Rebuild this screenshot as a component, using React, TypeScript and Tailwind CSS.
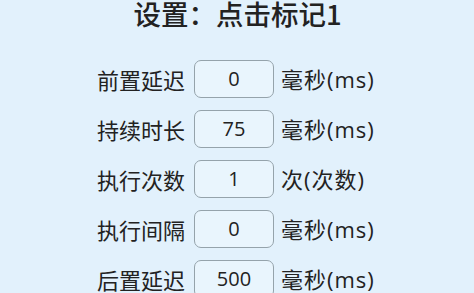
import React from "react";

const rows = [
  { label: "前置延迟", value: "0", unit: "毫秒(ms)" },
  { label: "持续时长", value: "75", unit: "毫秒(ms)" },
  { label: "执行次数", value: "1", unit: "次(次数)" },
  { label: "执行间隔", value: "0", unit: "毫秒(ms)" },
  { label: "后置延迟", value: "500", unit: "毫秒(ms)" },
];

export default function App() {
  return (
    <div
      className="w-[474px] h-[293px] overflow-hidden bg-[#e2f1fc] text-[#222222]"
      style={{ fontFamily: '"Noto Sans CJK SC", "Noto Sans", sans-serif' }}
    >
      <div className="text-center text-[27.5px] leading-[27px] font-medium pl-[1px] pt-[0px]">
        设置：点击标记1
      </div>
      <div className="mt-[33px] ml-[97px] flex flex-col gap-[12px]">
        {rows.map((r) => (
          <div key={r.label} className="flex items-center h-[38px]">
            <div className="w-[88px] text-[22px] leading-[38px] whitespace-nowrap">{r.label}</div>
            <div
              className="ml-[9px] w-[80px] h-[38px] rounded-[7px] border-[1.5px] border-[#95a3ab] bg-[#e9f5fd] flex items-center justify-center text-[20px]"
              style={{ fontFamily: '"Open Sans", "Noto Sans CJK SC", sans-serif' }}
            >
              {r.value}
            </div>
            <div
              className="ml-[7px] text-[22px] leading-[38px] whitespace-nowrap tracking-[1px]"
              style={{ fontFamily: '"Open Sans", "Noto Sans CJK SC", sans-serif' }}
            >
              {r.unit}
            </div>
          </div>
        ))}
      </div>
    </div>
  );
}
